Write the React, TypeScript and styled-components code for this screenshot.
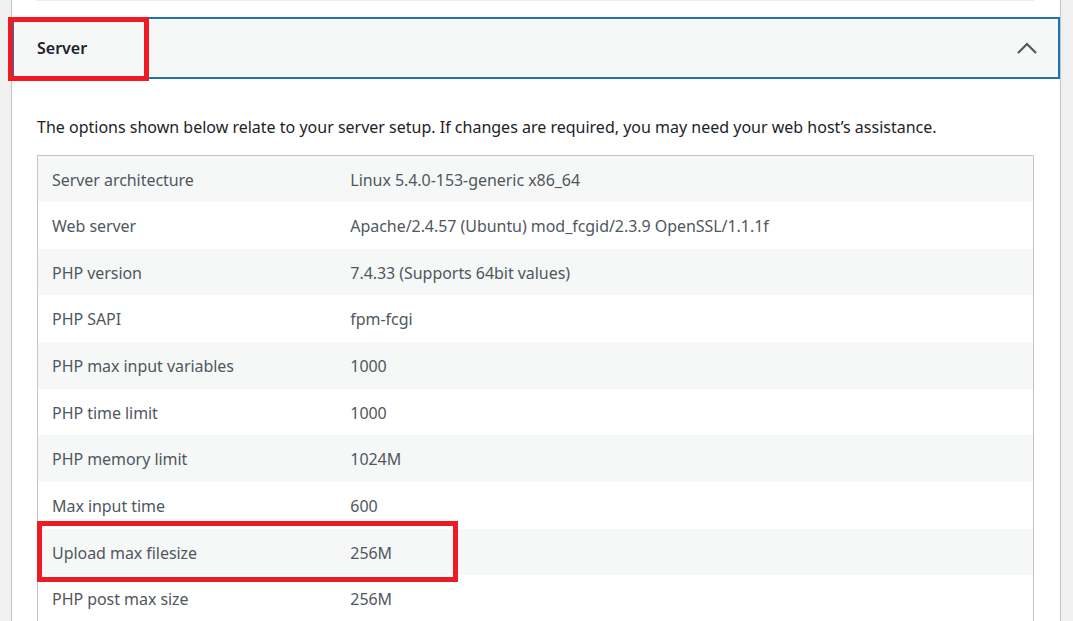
import React from "react";
import styled, { createGlobalStyle } from "styled-components";

const Global = createGlobalStyle`
  html, body { margin: 0; padding: 0; background: #f0f0f1; overflow: hidden; }
  body { font-family: "Noto Sans", "Open Sans", "Liberation Sans", sans-serif; }
`;

const Page = styled.div`
  padding-left: 11px;
  height: 621px;
  overflow: hidden;
`;

const Panel = styled.div`
  position: relative;
  width: 1050px;
  box-sizing: border-box;
  background: #fff;
  border-left: 1px solid #c3c4c7;
  border-right: 1px solid #c3c4c7;
  height: 621px;
`;

const PrevSection = styled.div`
  height: 17px;
  padding: 0 26px 0 25px;
  box-sizing: border-box;
`;

const PrevLine = styled.div`
  height: 1px;
  background: #ececec;
`;

const Header = styled.button`
  display: flex;
  align-items: center;
  justify-content: space-between;
  width: 100%;
  height: 62px;
  box-sizing: border-box;
  padding: 0 23px 0 25px;
  margin: 0;
  border: none;
  background: #f6f7f7;
  box-shadow: inset 0 0 0 2px #2271b1;
  font-family: inherit;
  font-size: 16px;
  font-weight: 600;
  color: #1d2327;
  cursor: pointer;
`;

const Content = styled.div`
  padding: 0 26px 0 25px;
`;

const Description = styled.p`
  margin: 0;
  padding: 35px 0 14px;
  font-size: 16px;
  line-height: 27px;
  color: #1d2327;
`;

const Table = styled.table`
  width: 100%;
  border-collapse: collapse;
  border: 1px solid #c3c4c7;
  table-layout: fixed;
`;

const Row = styled.tr<{ $striped: boolean }>`
  background: ${(p) => (p.$striped ? "#f6f7f7" : "#fff")};
`;

const Cell = styled.td<{ $label?: boolean }>`
  width: ${(p) => (p.$label ? "30%" : "auto")};
  height: 46.67px;
  box-sizing: border-box;
  padding: 1px 14px 0;
  font-size: 16px;
  color: #50575e;
  vertical-align: middle;
  letter-spacing: -0.05px;
`;

const Highlight = styled.div<{ $x: number; $y: number; $w: number; $h: number }>`
  position: absolute;
  left: ${(p) => p.$x}px;
  top: ${(p) => p.$y}px;
  width: ${(p) => p.$w}px;
  height: ${(p) => p.$h}px;
  box-sizing: border-box;
  border: 5px solid #ed1c24;
  pointer-events: none;
`;

const rows: [string, string][] = [
  ["Server architecture", "Linux 5.4.0-153-generic x86_64"],
  ["Web server", "Apache/2.4.57 (Ubuntu) mod_fcgid/2.3.9 OpenSSL/1.1.1f"],
  ["PHP version", "7.4.33 (Supports 64bit values)"],
  ["PHP SAPI", "fpm-fcgi"],
  ["PHP max input variables", "1000"],
  ["PHP time limit", "1000"],
  ["PHP memory limit", "1024M"],
  ["Max input time", "600"],
  ["Upload max filesize", "256M"],
  ["PHP post max size", "256M"],
];

const Chevron = () => (
  <svg width="20" height="12" viewBox="0 0 20 12" fill="none">
    <path d="M1 11 L10 2 L19 11" stroke="#50575e" strokeWidth="2.2" />
  </svg>
);

export default function App() {
  return (
    <>
      <Global />
      <Page>
        <Panel>
          <PrevSection>
            <PrevLine />
          </PrevSection>
          <Header>
            <span>Server</span>
            <Chevron />
          </Header>
          <Content>
            <Description>
              The options shown below relate to your server setup. If changes are required, you may need your web host’s assistance.
            </Description>
            <Table>
              <tbody>
                {rows.map(([k, v], i) => (
                  <Row key={k} $striped={i % 2 === 0}>
                    <Cell $label>{k}</Cell>
                    <Cell>{v}</Cell>
                  </Row>
                ))}
              </tbody>
            </Table>
          </Content>
          <Highlight $x={-4} $y={17} $w={141} $h={64} />
          <Highlight $x={25} $y={521} $w={421} $h={61} />
        </Panel>
      </Page>
    </>
  );
}
